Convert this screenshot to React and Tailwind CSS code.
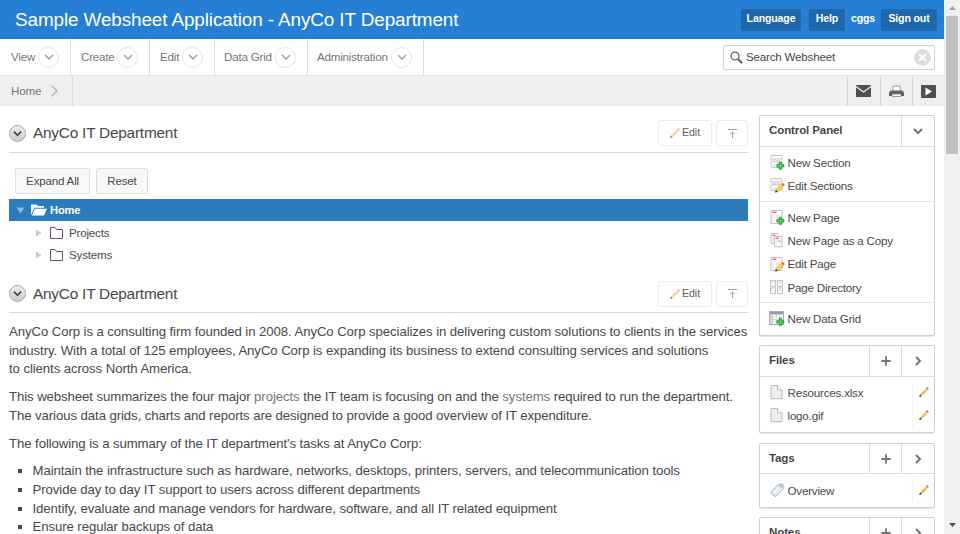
import React from "react";

function Chevron({ dir = "down", size = 10, color = "#999", width = 1.3 }) {
  const d = dir === "down" ? "M1 3l4 4 4-4" : "M3 1l4 4-4 4";
  return (
    <svg width={size} height={size} viewBox="0 0 10 10" fill="none" stroke={color} strokeWidth={width}>
      <path d={d} />
    </svg>
  );
}

function Pencil({ className = "", size = 11 }) {
  return (
    <svg className={className} width={size} height={size} viewBox="0 0 11 11">
      <path d="M1.700 7.300L6.700 2.300 8.700 4.300 3.700 9.300z" fill="#f2b632" />
      <path d="M2.400 7.900L7.300 3" stroke="#fbdc7a" strokeWidth=".9" />
      <path d="M6.700 2.300l1-1 2 2-1 1z" fill="#c4cdd3" />
      <path d="M7.700 1.300L8.500.6Q9.300.1 10 .8t.5 1.600l-.8.9z" fill="#f0625f" />
      <path d="M1.700 7.300L3.700 9.300.6 10.500z" fill="#e6c9a0" />
      <path d="M1.300 8.700l1.200 1.100-1.900.8z" fill="#222" stroke="#222" strokeWidth=".6" />
    </svg>
  );
}

const PlusBadge = () => (
  <g>
    <path d="M8.600 7.300h2.600v2.200h2.200v2.600h-2.200v2.200H8.600v-2.200H6.400V9.500h2.200z" fill="#34b844" stroke="#1d9530" strokeWidth=".7" />
    <path d="M9.900 8.300v5M7.400 10.800h5" stroke="#6fdd78" strokeWidth=".8" />
  </g>
);

const PencilBadge = () => (
  <g>
    <path d="M5.600 11.500l5-5.200 2.200 2.200-5 5.200-2.600.6z" fill="#fbc93e" stroke="#d69a25" strokeWidth=".5" />
    <path d="M6.700 12l5-5.200" stroke="#fde48d" strokeWidth=".8" />
    <path d="M10.900 6l1.300-1.300 2.200 2.200-1.300 1.300z" fill="#f0605c" />
    <path d="M5.400 12.100l1.700 1.500-2.500.9z" fill="#222" />
  </g>
);

function ItemIcon({ type }) {
  const page = (
    <>
      <path d="M.5.500h11v13H.5z" fill="#fdfdfd" stroke="#c0c0c0" />
      <path d="M2 2.300h4" stroke="#f2625e" strokeWidth="1.300" />
      <path d="M2.500 4.500v7.500" stroke="#e4e4e4" />
      <path d="M5.500 5h4.500v6.500H5.500z" fill="#ececec" />
    </>
  );
  const section = (
    <>
      <rect x=".5" y=".5" width="11" height="4.500" rx=".5" fill="#fafafa" stroke="#c3c6ca" />
      <rect x=".5" y="6.800" width="11" height="5.700" rx=".5" fill="#fafafa" stroke="#c3c6ca" />
      <path d="M2 3.700h8M2 10.500h5" stroke="#dcdcdc" />
    </>
  );
  const art = {
    newSection: <>{section}<PlusBadge /></>,
    editSection: <>{section}<PencilBadge /></>,
    newPage: <>{page}<PlusBadge /></>,
    editPage: <>{page}<PencilBadge /></>,
    copyPage: (
      <>
        <path d="M.5.500h7v10h-7z" fill="#fdfdfd" stroke="#c4c4c4" />
        <path d="M1.700 2.300h3" stroke="#f2625e" strokeWidth="1.300" />
        <path d="M2.500 4.500v5" stroke="#e0e0e0" />
        <path d="M4 3.500h7.500v10.200H4z" fill="#fdfdfd" stroke="#c0c0c0" />
        <path d="M5.200 5.300h3.300" stroke="#f2625e" strokeWidth="1.300" />
        <path d="M5.700 7.500v5" stroke="#e0e0e0" />
        <path d="M7.300 7.500h3V9h-3zM7.300 10.700h3" fill="#ccc" stroke="#ccc" strokeWidth=".5" />
      </>
    ),
    directory: (
      <g fill="#fdfdfd" stroke="#c0c0c0">
        <rect x="0" y=".5" width="5" height="5.700" />
        <rect x="6.900" y=".5" width="5" height="5.700" />
        <rect x="0" y="7.900" width="5" height="5.700" />
        <rect x="6.900" y="7.900" width="5" height="5.700" />
        <path d="M1.700 2.500h1.500M8.700 2.500h1.500M1.700 10h1.500M8.700 10h1.500" />
      </g>
    ),
    grid: (
      <>
        <rect x="-1" y=".5" width="14" height="13" fill="#fff" stroke="#a9adb0" />
        <path d="M-.5 1h13v2.500h-13z" fill="#8c9dac" />
        <path d="M-.5 3.500H2v9.500H-.5z" fill="#d4d8da" />
        <path d="M0 6h12.500M0 8.500h12.500M0 11h12.500M2.300 3.500v9.500M5.800 3.500v9.500M9.300 3.500v9.500" stroke="#c6cacd" strokeWidth=".7" />
        <PlusBadge />
      </>
    ),
    file: (
      <>
        <path d="M.5.500h6.500l4.500 4.500v8.700H.5z" fill="#eeeeee" stroke="#bbb" />
        <path d="M7 .5V5h4.500" fill="#fff" stroke="#bbb" />
      </>
    ),
    tag: (
      <>
        <path d="M.3 9.300L7.300 1.800l4.300-1 1.200.9-.2 4.400-7 7.200-1.200.1-4.100-3.200z" fill="#e1eaee" stroke="#adb5ba" />
        <path d="M3.200 9.800l5.500-5.800" stroke="#f6fafb" strokeWidth="1.500" />
        <circle cx="10.500" cy="3.200" r="1" fill="#fff" stroke="#8c969b" strokeWidth=".7" />
      </>
    ),
  }[type];
  return (
    <svg width="15" height="15" viewBox="-0.500 0 15 15" className="shrink-0 overflow-visible">
      {art}
    </svg>
  );
}

function NavItem({ label, className }) {
  return (
    <div className={`flex h-full items-center justify-between border-r border-[#dcdcdc] pr-[11px] ${className}`}>
      <span>{label}</span>
      <span className="flex h-[21px] w-[21px] items-center justify-center rounded-full border border-[#e4e4e4]">
        <Chevron size={10} />
      </span>
    </div>
  );
}

function SectionHeading({ className }) {
  return (
    <div className={`flex items-center justify-between border-b border-[#d8d8d8] ${className}`}>
      <div className="flex items-center">
        <span className="flex h-[17px] w-[17px] items-center justify-center rounded-full border border-[#a8a8a8] bg-gradient-to-b from-[#ededed] to-[#cdcdcd]">
          <Chevron size={9} color="#484848" width={2} />
        </span>
        <h2 className="ml-[7px] text-[15.400px] leading-5 tracking-[-0.230px] text-[#484848]">AnyCo IT Department</h2>
      </div>
      <div className="flex gap-1">
        <button className="flex h-[26px] w-[54px] items-center justify-center rounded-[3px] border border-[#ececec] text-[10.600px] tracking-[-0.050px] text-[#606060]">
          <Pencil size={10} className="mr-[2px] opacity-60" />
          Edit
        </button>
        <button className="flex h-[26px] w-8 items-center justify-center rounded-[3px] border border-[#ececec]">
          <svg width="9" height="9" viewBox="0 0 9 9" fill="none" stroke="#a0a0a0">
            <path d="M0 .5h9M4.500 9V3M2.200 5.200l2.300-2.300 2.300 2.300" />
          </svg>
        </button>
      </div>
    </div>
  );
}

function TreeRow({ label }) {
  return (
    <div className="flex h-[22.300px] items-center pl-[27px]">
      <svg width="6" height="8" viewBox="0 0 6 8"><path d="M0 .5l5.500 3.500L0 7.500z" fill="#c9c9c9" /></svg>
      <svg className="ml-2" width="14" height="12" viewBox="0 0 14 12" fill="none" stroke="#6b4a70">
        <path d="M.5 11.500V.5h4.500l1.500 2h6v9z" />
      </svg>
      <span className="ml-[5px]">{label}</span>
    </div>
  );
}

function Panel({ title, add, dir = "right", children }) {
  return (
    <section className="rounded-[2px] border border-[#cfcfcf] bg-white shadow-[0_1px_1px_#e6e6e6]">
      <header className="flex h-[30.500px] border-b border-[#dedede]">
        <h3 className="flex flex-1 items-center pl-[9px] text-[11.500px] font-bold tracking-[-0.100px] text-[#454545]">{title}</h3>
        {add && (
          <span className="flex w-[32px] items-center justify-center border-l border-[#dedede]">
            <svg width="10" height="10" viewBox="0 0 10 10" stroke="#757575" strokeWidth="1.800"><path d="M5 .3v9.400M.3 5h9.400" /></svg>
          </span>
        )}
        <span className="flex w-[33px] items-center justify-center border-l border-[#dedede]">
          <Chevron dir={dir} color="#757575" width={2} />
        </span>
      </header>
      {children}
    </section>
  );
}

function Item({ icon, label, edit }) {
  return (
    <div className="flex h-[23.200px] items-center pl-[10px]">
      <ItemIcon type={icon} />
      <span className="ml-[2.500px] flex-1">{label}</span>
      {edit && (
        <span className="flex h-[22px] w-[22px] items-center justify-center border-l border-[#f2f2f2]"><Pencil className="-mt-px" size={10} /></span>
      )}
    </div>
  );
}

export default function App() {
  return (
    <div className="flex h-[534px] w-[960px] overflow-hidden bg-white font-['Liberation_Sans',Arial,sans-serif] text-[11.600px] tracking-[-0.200px] text-[#484848]">
      <div className="w-[944px] shrink-0">
        <header className="flex h-[39px] items-center justify-between bg-[#2580d5] pr-[7px] pl-[15px] text-white">
          <h1 className="text-[18.900px] leading-6 tracking-[-0.110px]">Sample Websheet Application - AnyCo IT Department</h1>
          <div className="flex items-center text-[10.600px] font-bold tracking-[-0.150px]">
            <span className="flex h-[22px] w-[60px] items-center justify-center rounded-[2px] bg-[#1e67ac] pb-px">Language</span>
            <span className="ml-2 flex h-[22px] w-9 items-center justify-center rounded-[2px] bg-[#1e67ac] pb-px">Help</span>
            <span className="w-9 pb-px text-center">cggs</span>
            <span className="flex h-[22px] w-[56px] items-center justify-center rounded-[2px] bg-[#1e67ac] pb-px">Sign out</span>
          </div>
        </header>
        <nav className="flex h-[37px] items-center border-b border-[#e2e2e2] text-[#757575]">
          <NavItem label="View" className="w-[71px] pl-[11px]" />
          <NavItem label="Create" className="w-[79px] pl-[10px]" />
          <NavItem label="Edit" className="w-[65px] pl-[10px]" />
          <NavItem label="Data Grid" className="w-[93px] pl-[9px]" />
          <NavItem label="Administration" className="w-[116px] pl-[9px]" />
          <div className="mr-[9px] ml-auto flex h-[25px] w-[212px] items-center rounded-[2px] border border-[#d0d0d0] pr-[3px] pl-[6px] text-[#484848]">
            <svg width="13" height="13" viewBox="0 0 13 13" fill="none" stroke="#666">
              <circle cx="5" cy="5" r="3.900" strokeWidth="1.400" />
              <path d="M8 8l4.200 4.200" strokeWidth="2.200" />
            </svg>
            <span className="ml-[3px] flex-1">Search Websheet</span>
            <svg width="17" height="17" viewBox="0 0 17 17">
              <circle cx="8.500" cy="8.500" r="8.300" fill="#dcdcdc" />
              <path d="M5 5l7 7M12 5l-7 7" stroke="#fff" strokeWidth="2" />
            </svg>
          </div>
        </nav>
        <div className="flex h-[30px] items-center justify-between bg-[#efefef] text-[#757575]">
          <div className="flex h-full w-[73px] items-center border-r border-[#d9d9d9] pl-[11px]">
            <span>Home</span>
            <svg className="ml-[10px]" width="7" height="12" viewBox="0 0 7 12" fill="none" stroke="#aaa" strokeWidth="1.200"><path d="M.7.700L6 6 .7 11.300" /></svg>
          </div>
          <div className="flex h-full">
            <span className="flex w-[33px] items-center justify-center border-l border-[#d6d6d6]">
              <svg className="mr-px" width="15" height="12" viewBox="0 0 15 12" fill="#505050"><path d="M0 0h15v.8L7.500 6.300 0 .8z" /><path d="M0 2.300l7.500 5.500L15 2.300V12H0z" /></svg>
            </span>
            <span className="flex w-[32px] items-center justify-center border-l border-[#d6d6d6]">
              <svg className="mr-px" width="15" height="12" viewBox="0 0 15 12">
                <path d="M4 6V1h7v5" fill="#fff" stroke="#999" />
                <path d="M1.500 5.500h12L15 7.500V11H0V7.500z" fill="#606060" />
                <path d="M3 9h9v2.500H3z" fill="#f5f5f5" stroke="#777" strokeWidth=".7" />
              </svg>
            </span>
            <span className="flex w-[32px] items-center justify-center border-l border-[#d6d6d6]">
              <svg width="15" height="13" viewBox="0 0 15 13"><rect width="15" height="13" rx="1" fill="#505050" /><path d="M4.500 2.500l6.500 4-6.500 4z" fill="#fff" /></svg>
            </span>
          </div>
        </div>

        <div className="flex gap-[10px] pl-[9px]">
          <main className="w-[740px] pr-px">
            <SectionHeading className="mt-[8px] h-[39px]" />
            <div className="mt-[15px] ml-[6px] flex gap-[6px]">
              <button className="h-[26px] w-[75px] rounded-[2px] border border-[#dfdfdf] bg-[#f8f8f8]">Expand All</button>
              <button className="h-[26px] w-[52px] rounded-[2px] border border-[#dfdfdf] bg-[#f8f8f8]">Reset</button>
            </div>
            <div className="mt-[5px] flex h-[22.400px] items-center bg-[#2d7bbb] pl-[7px] text-[11.100px] font-bold tracking-[-0.100px] text-white">
              <svg width="9" height="7" viewBox="0 0 9 7"><path d="M.5.500h8L4.500 6.500z" fill="#8dbbe0" /></svg>
              <svg className="ml-[6px]" width="16" height="12" viewBox="0 0 16 12" fill="#fff">
                <path d="M0 11V.5h5.500L7 2h6v1.800H3.300z" />
                <path d="M3.900 4.800H16L13 11.500H.9z" />
              </svg>
              <span className="ml-[3px]">Home</span>
            </div>
            <TreeRow label="Projects" />
            <TreeRow label="Systems" />
            <SectionHeading className="mt-[8.600px] h-[38.900px]" />
            <div className="mt-[9.500px] flex flex-col gap-[9.300px] text-[13.200px] leading-[18.600px] tracking-[-0.084px] whitespace-nowrap">
              <p>
                AnyCo Corp is a consulting firm founded in 2008. AnyCo Corp specializes in delivering custom solutions to clients in the services<br />
                industry. With a total of 125 employees, AnyCo Corp is expanding its business to extend consulting services and solutions<br />
                to clients across North America.
              </p>
              <p>
                This websheet summarizes the four major <a className="text-[#757575]">projects</a> the IT team is focusing on and the <a className="text-[#757575]">systems</a> required to run the department.<br />
                The various data grids, charts and reports are designed to provide a good overview of IT expenditure.
              </p>
              <p>The following is a summary of the IT department's tasks at AnyCo Corp:</p>
              <ul className="list-[square] pl-[23.500px]">
                <li>Maintain the infrastructure such as hardware, networks, desktops, printers, servers, and telecommunication tools</li>
                <li>Provide day to day IT support to users across different departments</li>
                <li>Identify, evaluate and manage vendors for hardware, software, and all IT related equipment</li>
                <li>Ensure regular backups of data</li>
              </ul>
            </div>
          </main>
          <aside className="mt-[9px] flex h-[419px] w-[176px] flex-col gap-[9.600px] overflow-hidden *:shrink-0">
            <Panel title="Control Panel" dir="down">
              <div className="border-b border-[#e6e6e6] pt-[4.700px] pb-[3.500px]">
                <Item icon="newSection" label="New Section" />
                <Item icon="editSection" label="Edit Sections" />
              </div>
              <div className="border-b border-[#e6e6e6] pt-[4px] pb-[3.500px]">
                <Item icon="newPage" label="New Page" />
                <Item icon="copyPage" label="New Page as a Copy" />
                <Item icon="editPage" label="Edit Page" />
                <Item icon="directory" label="Page Directory" />
              </div>
              <div className="pt-[3.500px] pb-[4.500px]"><Item icon="grid" label="New Data Grid" /></div>
            </Panel>
            <Panel title="Files" add>
              <div className="py-[4.600px]">
                <Item icon="file" label="Resources.xlsx" edit />
                <Item icon="file" label="logo.gif" edit />
              </div>
            </Panel>
            <Panel title="Tags" add>
              <div className="py-[4.600px]"><Item icon="tag" label="Overview" edit /></div>
            </Panel>
            <Panel title="Notes" add />
          </aside>
        </div>
      </div>
      <div className="flex h-full w-4 flex-col items-center bg-[#f1f1f1]">
        <svg className="mt-[6px] shrink-0" width="7" height="4" viewBox="0 0 7 4"><path d="M0 4l3.500-4L7 4z" fill="#a3a3a3" /></svg>
        <div className="mt-[6px] h-[138px] w-3 shrink-0 bg-[#c1c1c1]" />
        <svg className="mt-auto mb-[7px] shrink-0" width="7" height="4" viewBox="0 0 7 4"><path d="M0 0h7L3.500 4z" fill="#505050" /></svg>
      </div>
    </div>
  );
}
